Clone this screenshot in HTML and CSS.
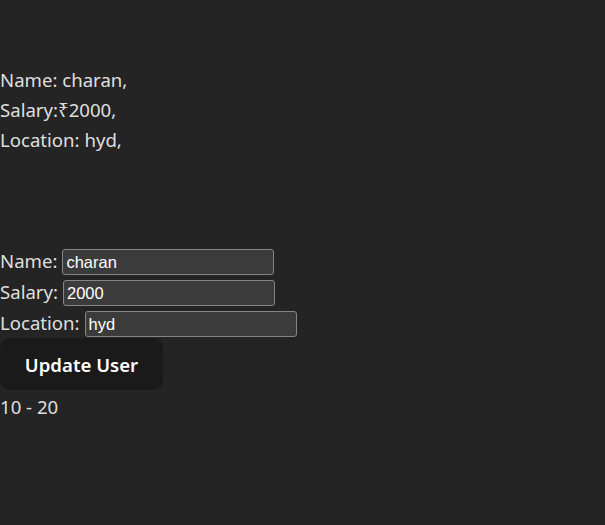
FILE: index.html
```html
<!DOCTYPE html>
<html lang="en">
<head>
<meta charset="utf-8">
<title>User</title>
<link rel="stylesheet" href="styles.css">
</head>
<body>
<div class="app">
  <div class="info">
    <div class="line">Name: charan,</div>
    <div class="line">Salary:₹2000,</div>
    <div class="line">Location: hyd,</div>
  </div>
  <form class="form">
    <div class="row"><label class="label">Name:</label><input class="field" type="text" value="charan"></div>
    <div class="row"><label class="label">Salary:</label><input class="field" type="text" value="2000"></div>
    <div class="row"><label class="label">Location:</label><input class="field" type="text" value="hyd"></div>
    <button class="btn" type="button">Update User</button>
  </form>
  <div class="line">10 - 20</div>
</div>
</body>
</html>
```
FILE: styles.css
```css
html, body {
  margin: 0;
  padding: 0;
  background: #242424;
}
body {
  color: rgba(255, 255, 255, 0.87);
  font-family: "Noto Sans", "Open Sans", sans-serif;
  font-size: 18.6px;
  line-height: 30px;
  min-height: 525px;
}
.app {
  padding-top: 65px;
}
.line {
  height: 30px;
}
.form {
  margin: 90px 0 0 0;
}
.row {
  display: flex;
  align-items: center;
  gap: 5px;
  height: 31px;
}
.field {
  align-self: flex-end;
  margin: 0 0 1px 0;
  box-sizing: border-box;
  width: 212px;
  height: 26px;
  padding: 1px 3px;
  background: #3b3b3b;
  border: 1px solid #858585;
  border-radius: 3px;
  color: #ffffff;
  font-family: "Liberation Sans", Arial, sans-serif;
  font-size: 16.5px;
}
.btn {
  display: block;
  box-sizing: border-box;
  width: 163px;
  height: 52px;
  margin: 0 0 2px 0;
  padding: 0;
  border: 1px solid transparent;
  border-radius: 10px;
  background: #1a1a1a;
  color: #ffffff;
  font-family: "Noto Sans", "Open Sans", sans-serif;
  font-size: 18.6px;
  font-weight: 600;
}
```
